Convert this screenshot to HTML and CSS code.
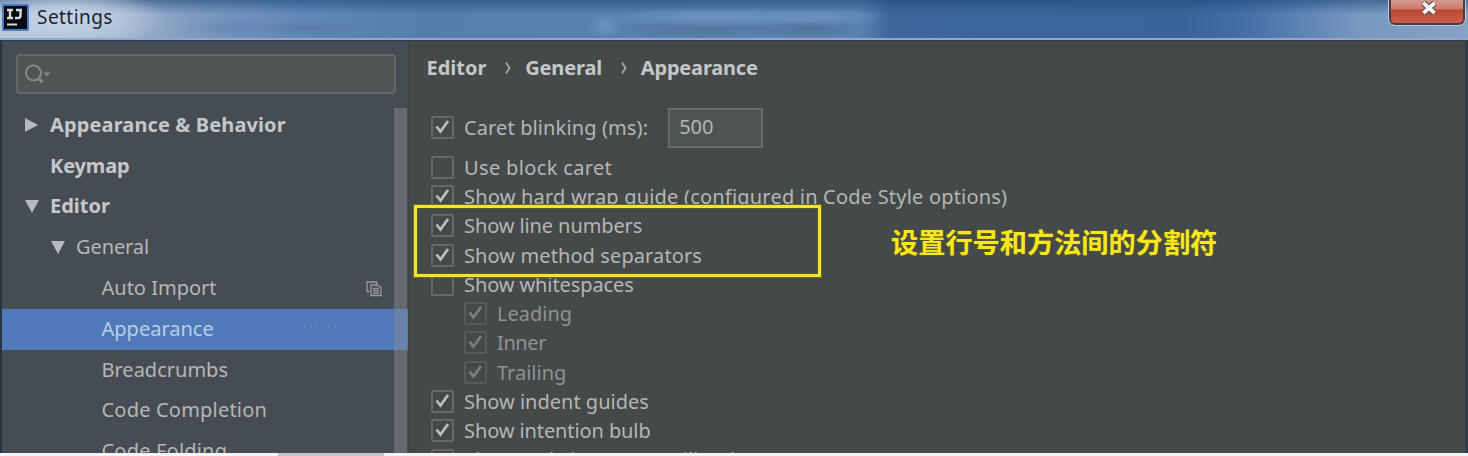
FILE: index.html
```html
<!DOCTYPE html>
<html lang="en">
<head>
<meta charset="utf-8">
<title>Settings</title>
<link rel="stylesheet" href="styles.css">
</head>
<body>
<svg class="defs" width="0" height="0">
  <symbol id="tick" viewBox="0 0 23 23"><path d="M5.500 10.500 9.500 15.500 17 5" fill="none" stroke="currentColor" stroke-width="2.800"/></symbol>
</svg>
<div class="window">
  <header class="titlebar">
    <svg class="logo" width="27" height="27" viewBox="0 0 27 27">
      <rect width="27" height="27" rx="1" fill="#4a7cc4"/>
      <rect x="2" y="2" width="23" height="23" fill="#080b10"/>
      <path d="M5 6h6M8 6v8M5 14h6M14 6h6M18.500 6v5.500q0 2.500-2.500 2.500h-3" fill="none" stroke="#d5d8dc" stroke-width="2.400"/>
      <path d="M5 20.500h10" stroke="#d5d8dc" stroke-width="2"/>
    </svg>
    <span class="title">Settings</span>
    <button class="close" aria-label="Close">
      <svg width="20" height="18" viewBox="0 0 20 18"><path d="M4.500 4 15.500 14M15.500 4 4.500 14" stroke="#5c4545" stroke-width="6"/><path d="M4.500 4 15.500 14M15.500 4 4.500 14" stroke="#f4f4f4" stroke-width="3.800"/></svg>
    </button>
  </header>
  <div class="body">
    <aside class="sidebar">
      <div class="search">
        <svg width="30" height="24" viewBox="0 0 30 24"><circle cx="9.500" cy="9" r="7.500" fill="none" stroke="#85898b" stroke-width="2"/><path d="M15 14.500 18.500 18.500" stroke="#85898b" stroke-width="3"/><path d="M19 8.500h7.500L22.700 12.500z" fill="#85898b"/></svg>
      </div>
      <div class="tree-area">
        <ul class="tree">
          <li class="top"><i class="arrow right"></i><span class="t-ab">Appearance &amp; Behavior</span></li>
          <li class="top"><i class="arrow"></i><span class="t-key">Keymap</span></li>
          <li class="top"><i class="arrow down"></i><span>Editor</span></li>
          <li class="mid"><i class="arrow down"></i><span class="t-gen">General</span></li>
          <li class="leaf"><span>Auto Import</span>
            <svg class="copy" width="16" height="16" viewBox="0 0 16 16" fill="none" stroke="#999c9f" stroke-width="1.300"><path d="M3.500 10.500H1V1h9.500v2.500M5 14.500V4h6.500l3.500 2.500v8zM7 7.500h6M7 9.700h6M7 12h6"/></svg></li>
          <li class="leaf selected"><span>Appearance</span><i class="specks"></i></li>
          <li class="leaf"><span>Breadcrumbs</span></li>
          <li class="leaf"><span class="t-comp">Code Completion</span></li>
          <li class="leaf"><span class="t-comp">Code Folding</span></li>
        </ul>
        <div class="scrollbar"></div>
      </div>
    </aside>
    <main class="content">
      <nav class="crumbs"><b>Editor</b><svg width="8" height="14" viewBox="0 0 8 14"><path d="M2 1.500 5.500 7 2 12.500" fill="none" stroke="#a5a8a8" stroke-width="1.800"/></svg><b class="c-gen">General</b><svg width="8" height="14" viewBox="0 0 8 14"><path d="M2 1.500 5.500 7 2 12.500" fill="none" stroke="#a5a8a8" stroke-width="1.800"/></svg><b class="c-app">Appearance</b></nav>
      <div class="row first"><i class="box"><svg><use href="#tick"/></svg></i><span class="o-caret">Caret blinking (ms):</span><span class="field">500</span></div>
      <div class="row"><i class="box"></i><span class="o-block">Use block caret</span></div>
      <div class="row"><i class="box"><svg><use href="#tick"/></svg></i><span class="o-wrap">Show hard wrap guide (configured in Code Style options)</span></div>
      <div class="row"><i class="box"><svg><use href="#tick"/></svg></i><span class="o-line">Show line numbers</span></div>
      <div class="row"><i class="box"><svg><use href="#tick"/></svg></i><span class="o-sep">Show method separators</span></div>
      <div class="row"><i class="box"></i><span class="o-line">Show whitespaces</span></div>
      <div class="row sub"><i class="box"><svg><use href="#tick"/></svg></i><span>Leading</span></div>
      <div class="row sub"><i class="box"><svg><use href="#tick"/></svg></i><span class="o-inner">Inner</span></div>
      <div class="row sub"><i class="box"><svg><use href="#tick"/></svg></i><span>Trailing</span></div>
      <div class="row"><i class="box"><svg><use href="#tick"/></svg></i><span>Show indent guides</span></div>
      <div class="row"><i class="box"><svg><use href="#tick"/></svg></i><span class="o-line">Show intention bulb</span></div>
      <div class="row"><i class="box"><svg><use href="#tick"/></svg></i><span class="o-lens">Show code lens on scrollbar hover</span></div>
    </main>
  </div>
  <footer class="edge"><i></i></footer>
  <div class="highlight"></div>
  <div class="note" lang="zh-CN">设置行号和方法间的分割符</div>
</div>
</body>
</html>
```

FILE: styles.css
```css
* { box-sizing: border-box; }
body { margin: 0; font-family: "Noto Sans", "Noto Sans CJK SC", sans-serif; font-size: 20px; color: #b4b7b7; }
.defs { position: absolute; }
.window { position: relative; width: 1468px; height: 456px; overflow: hidden; display: flex; flex-direction: column; background: #43484a; }
.titlebar {
  height: 41px; flex: none; display: flex; align-items: flex-start; padding: 4px 0 0 2px;
  border-bottom: 1px solid #2c3d55;
  box-shadow: inset 0 -2px #8fa9c6;
  background:
    radial-gradient(ellipse 100px 32px at 65px 18px, #c2d0e2 0 20%, #c2d0e200),
    radial-gradient(ellipse 60px 10px at 240px 28px, #6483a8aa, #6483a800),
    radial-gradient(ellipse 30px 14px at 240px 26px, #678fc5, #678fc500),
    radial-gradient(ellipse 60px 8px at 310px 28px, #52749caa, #52749c00),
    radial-gradient(ellipse 18px 14px at 605px 26px, #6a93c3, #6a93c300),
    radial-gradient(ellipse 120px 10px at 720px 17px, #6f95c6, #6f95c600),
    radial-gradient(ellipse 60px 9px at 825px 17px, #6b90c0, #6b90c000),
    radial-gradient(ellipse 90px 9px at 700px 29px, #52759b, #52759b00),
    radial-gradient(ellipse 70px 9px at 810px 29px, #52759b, #52759b00),
    linear-gradient(#1f4a7a99, #1f4a7a00 14px),
    linear-gradient(90deg, #b5c5da, #a1b5cf 120px, #7f9bbf 190px, #6188b8 300px, #557eab 420px, #5b83b2 860px, #3b679b 890px, #37659a 1180px, #416ea6 1240px, #7898c1 1360px, #86a2c5);
}
.logo { flex: none; }
.title { margin-left: 8px; line-height: 26px; color: #1b2431; font-size: 19px; letter-spacing: .45px; }
.close { margin: -4px 3px 0 auto; width: 76px; height: 25px; padding: 0 0 7px 4px; border: 2px solid #493b43; border-top: 0; border-radius: 0 0 6px 6px; outline: 1px solid #bac8dc; background: linear-gradient(#d59a91, #cd7969 9px, #b84731 10px, #c96049); display: flex; align-items: center; justify-content: center; }
.body { flex: 1; min-height: 0; display: flex; border-left: 2px solid #263340; border-right: 3px solid #303e49; overflow: hidden; }
.sidebar { width: 406px; flex: none; background: #464c54; padding: 13px 0 0; }
.search { width: 380px; height: 40px; margin-left: 14px; border: 2px solid #64686b; border-radius: 4px; background: #4f5454; padding: 8px 0 0 6px; }
.tree-area { display: flex; margin-top: 11px; height: 400px; position: relative; }
.tree { list-style: none; margin: 0; padding: 0; width: 406px; }
.tree li { height: 40.8px; display: flex; align-items: center; white-space: nowrap; }
.tree span, .crumbs b { padding-bottom: 2px; }
.top { padding-left: 22px; font-weight: 700; color: #c5c8ca; }
.mid { padding-left: 48px; }
.leaf { padding-left: 99.5px; }
.tree .selected { background: #5079b9; color: #b9cde7; }
.t-ab { letter-spacing: .12px; }
.t-key { letter-spacing: -.15px; }
.t-gen { letter-spacing: -.1px; }
.t-comp { letter-spacing: .2px; }
.arrow { width: 26px; flex: none; display: flex; }
.arrow::before { content: ""; }
.right::before { border-left: 13px solid #b4bac0; border-top: 7.5px solid transparent; border-bottom: 7.5px solid transparent; margin-left: 1px; }
.down::before { border-top: 13px solid #b4bac0; border-left: 7px solid transparent; border-right: 7px solid transparent; margin-left: 1px; }
.copy { margin-left: auto; margin-right: 26px; }
.specks { width: 41px; height: 1px; margin-left: 84px; margin-top: -5px; background: repeating-linear-gradient(90deg, #8eabd4 0 1px, transparent 1px 6px); }
.scrollbar { position: absolute; right: 1px; top: 3px; width: 13px; bottom: 0; background: #8a8e9475; }
.content { flex: 1; min-width: 0; background: #44494a; border-left: 1px solid #3b4143; }
.crumbs { height: 30px; margin: 12px 0 0 17.5px; display: flex; align-items: center; color: #c5c7c7; }
.crumbs svg { margin: 0 13.300px 0 17.500px; }
.c-gen { letter-spacing: -.15px; }
.c-app { letter-spacing: -.2px; }
.row { height: 29.3px; padding-left: 22px; display: flex; align-items: center; white-space: nowrap; }
.first { height: 40px; margin: 24.500px 0 5px; }
.box { width: 23px; height: 23px; flex: none; margin-right: 10px; border: 2px solid #65696a; border-radius: 2px; display: flex; }
.box svg { width: 23px; height: 23px; margin: -2px; flex: none; color: #babdbd; }
.sub { padding-left: 55px; color: #8f9394; }
.sub .box { border-color: #565b5c; }
.sub .box svg { color: #7a7f80; }
.o-caret { letter-spacing: .12px; }
.o-block { letter-spacing: .35px; }
.o-wrap { letter-spacing: .2px; }
.o-line { letter-spacing: -.1px; }
.o-sep { letter-spacing: .1px; }
.o-inner { letter-spacing: -.4px; }
.o-lens { padding-bottom: 2px; }
.field { width: 95px; height: 40px; margin-left: 20px; border: 2px solid #686c6d; background: #4e5354; padding-left: 9px; line-height: 34px; }
.edge { height: 3px; flex: none; background: #f4f3f5; display: flex; }
.edge i { width: 106px; margin-left: 278px; background: #c4c4c8; }
.highlight { position: absolute; left: 413px; top: 204px; width: 409px; height: 74px; border: 4px solid #f2e52b; outline: 1px solid #6b671f; outline-offset: -1px; box-shadow: inset 0 0 0 1px #5b581c; }
.note { position: absolute; left: 891px; top: 222px; font: 700 27.200px/38px "Noto Sans CJK SC", sans-serif; color: #f8e71c; white-space: nowrap; text-shadow: 0 0 2px #77701b; }
```
